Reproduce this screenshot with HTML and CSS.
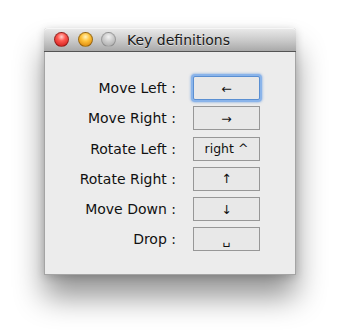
FILE: index.html
```html
<!DOCTYPE html>
<html>
<head>
<meta charset="utf-8">
<link rel="stylesheet" href="styles.css">
</head>
<body>
<div class="window">
  <div class="titlebar">
    <div class="lights">
      <span class="light red"></span>
      <span class="light yellow"></span>
      <span class="light gray"></span>
    </div>
    <div class="title">Key definitions</div>
  </div>
  <div class="content">
    <div class="grid">
      <div class="label">Move Left :</div>
      <div class="key focused">&#x2190;&#xFE0E;</div>
      <div class="label">Move Right :</div>
      <div class="key">&#x2192;&#xFE0E;</div>
      <div class="label">Rotate Left :</div>
      <div class="key">right ^</div>
      <div class="label">Rotate Right :</div>
      <div class="key">&#x2191;&#xFE0E;</div>
      <div class="label">Move Down :</div>
      <div class="key">&#x2193;&#xFE0E;</div>
      <div class="label">Drop :</div>
      <div class="key">&#x2423;</div>
    </div>
  </div>
</div>
</body>
</html>
```
FILE: styles.css
```css
html, body {
  margin: 0;
  padding: 0;
  background: #ffffff;
}
body {
  width: 340px;
  height: 336px;
  overflow: hidden;
  font-family: "DejaVu Sans", "Liberation Sans", sans-serif;
}
.window {
  margin: 28px 0 0 44px;
  width: 252px;
  height: 247px;
  box-sizing: border-box;
  background: #ececec;
  border: 1px solid #a4a4a4;
  border-top: none;
  border-radius: 4px 4px 0 0;
  box-shadow: 0 22px 30px rgba(0, 0, 0, 0.42), 0 2px 8px rgba(0, 0, 0, 0.18);
  display: flex;
  flex-direction: column;
}
.titlebar {
  height: 23px;
  margin: 0 -1px;
  background: linear-gradient(#ebebeb, #c9c9c9 55%, #a9a9a9);
  border-bottom: 1px solid #545454;
  border-radius: 4px 4px 0 0;
  display: flex;
  align-items: center;
  padding-left: 10px;
  gap: 11px;
  box-shadow: inset 0 1px 0 #f6f6f6;
}
.lights {
  display: flex;
  gap: 8.5px;
  align-items: center;
}
.light {
  width: 15px;
  height: 15px;
  border-radius: 50%;
  box-sizing: border-box;
  border: 1px solid rgba(0, 0, 0, 0.35);
}
.red {
  background: radial-gradient(circle at 50% 30%, #ffd0cc 0, #ff5a52 35%, #c81010 100%);
}
.yellow {
  background: radial-gradient(circle at 50% 30%, #fff4c0 0, #ffc23a 38%, #d27a00 100%);
}
.gray {
  background: radial-gradient(circle at 50% 30%, #f2f2f2 0, #cfcfcf 40%, #a3a3a3 100%);
  border-color: rgba(0, 0, 0, 0.2);
}
.title {
  font-size: 14px;
  color: #1a1a1a;
  text-shadow: 0 1px 0 rgba(255, 255, 255, 0.5);
  padding-top: 1px;
}
.content {
  flex: 1;
  padding: 24px 0 0 16px;
}
.grid {
  display: grid;
  grid-template-columns: 115px 67px;
  column-gap: 17px;
  row-gap: 6.3px;
  grid-auto-rows: 24px;
  align-items: center;
}
.label {
  text-align: right;
  font-size: 14px;
  color: #111;
  white-space: nowrap;
}
.key {
  height: 24px;
  box-sizing: border-box;
  border: 1px solid #979797;
  background: #e8e8e8;
  font-size: 12.5px;
  color: #111;
  display: flex;
  align-items: center;
  justify-content: center;
  white-space: nowrap;
}
.key.focused {
  border: 1px solid #5a8fd2;
  border-radius: 2px;
  box-shadow: 0 0 0 2px #8ab4ea, 0 0 2px 3px rgba(120, 165, 225, 0.5);
}
```
